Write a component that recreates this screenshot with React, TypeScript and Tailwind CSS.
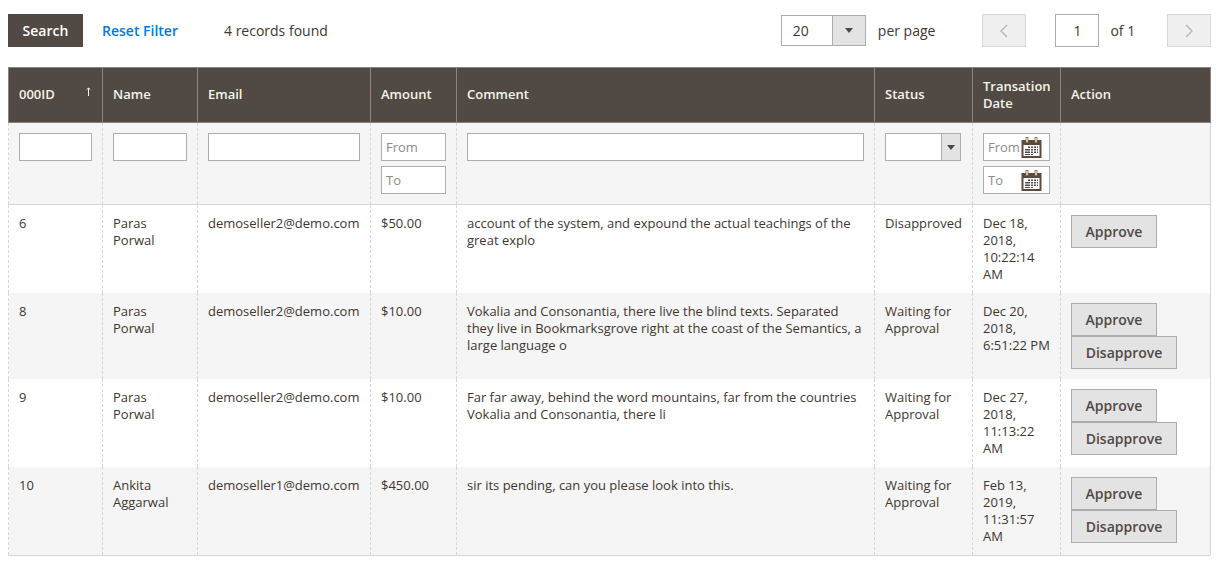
const rows = [
  {
    id: "6",
    name: "Paras Porwal",
    email: "demoseller2@demo.com",
    amount: "$50.00",
    comment: "account of the system, and expound the actual teachings of the great explo",
    status: "Disapproved",
    date: "Dec 18, 2018, 10:22:14 AM",
    disapprove: false,
  },
  {
    id: "8",
    name: "Paras Porwal",
    email: "demoseller2@demo.com",
    amount: "$10.00",
    comment:
      "Vokalia and Consonantia, there live the blind texts. Separated they live in Bookmarksgrove right at the coast of the Semantics, a large language o",
    status: "Waiting for Approval",
    date: "Dec 20, 2018, 6:51:22 PM",
    disapprove: true,
  },
  {
    id: "9",
    name: "Paras Porwal",
    email: "demoseller2@demo.com",
    amount: "$10.00",
    comment:
      "Far far away, behind the word mountains, far from the countries Vokalia and Consonantia, there li",
    status: "Waiting for Approval",
    date: "Dec 27, 2018, 11:13:22 AM",
    disapprove: true,
  },
  {
    id: "10",
    name: "Ankita Aggarwal",
    email: "demoseller1@demo.com",
    amount: "$450.00",
    comment: "sir its pending, can you please look into this.",
    status: "Waiting for Approval",
    date: "Feb 13, 2019, 11:31:57 AM",
    disapprove: true,
  },
];

function Caret() {
  return <span className="block h-0 w-0 border-x-[4.5px] border-t-[5px] border-x-transparent border-t-[#514943]" />;
}

function Calendar() {
  return (
    <svg width="21" height="21" viewBox="0 0 21 21" className="shrink-0">
      <rect x="0.5" y="3" width="20" height="18" fill="#5e4a3c" />
      <rect x="2.5" y="8" width="16" height="11" fill="#fff" />
      <rect x="5" y="0.5" width="2" height="5" fill="#fff" stroke="#8a5f3a" strokeWidth="0.8" />
      <rect x="14" y="0.5" width="2" height="5" fill="#fff" stroke="#8a5f3a" strokeWidth="0.8" />
      <g fill="#514943">
        <rect x="7" y="9.5" width="10" height="1.5" />
        <rect x="4" y="12" width="13" height="1.5" />
        <rect x="4" y="14.5" width="13" height="1.5" />
        <rect x="4" y="17" width="9" height="1" />
      </g>
      <g fill="#fff">
        <rect x="9" y="9" width="1" height="9" />
        <rect x="12" y="9" width="1" height="9" />
        <rect x="15" y="9" width="1" height="9" />
      </g>
    </svg>
  );
}

function TextInput({ className, placeholder }: { className: string; placeholder?: string }) {
  return (
    <div className={`flex h-7 items-center border border-[#adadad] bg-white text-[#8a8a8a] ${className}`}>
      {placeholder}
    </div>
  );
}

function DateInput({ placeholder }: { placeholder: string }) {
  return (
    <div className="flex h-7 w-[67px] items-center justify-between border border-[#adadad] bg-white pl-[4px] pr-[7px] text-[#8a8a8a]">
      <span>{placeholder}</span>
      <Calendar />
    </div>
  );
}

function ActionButton({ label, className }: { label: string; className: string }) {
  return (
    <button className={`block h-[33px] border border-[#adadad] bg-[#e3e3e3] text-[14px] font-semibold text-[#514943] ${className}`}>
      {label}
    </button>
  );
}

const th = "border border-[#8a837e] px-[10px] text-left align-middle font-semibold text-[13px] leading-[17px] text-[#f7f3eb]";
const thSingle = `${th} pb-[2px]`;
const td = "border-x border-dashed border-x-[#d6d6d6] p-[10px] align-top";

export default function App() {
  return (
    <div className="h-[567px] w-[1221px] overflow-hidden bg-white font-['Open_Sans',sans-serif] text-[13px] leading-[17px] text-[#41362f]">
      <div className="flex h-[67px] items-start pl-2 pt-[14px]">
        <button className="h-[33px] w-[75px] bg-[#514943] text-[14px] font-semibold text-white">Search</button>
        <span className="ml-[19px] mt-2 text-[14px] font-semibold text-[#007bdb]">Reset Filter</span>
        <span className="ml-[46px] mt-2 text-[14px]">4 records found</span>
        <div className="ml-[453px] mt-px flex h-[31px] w-[85px] border border-[#adadad]">
          <span className="flex-1 pl-[11px] pt-[6px] text-[14px]">20</span>
          <span className="flex w-[33px] items-center justify-center border-l border-[#adadad] bg-[#e3e3e3]">
            <Caret />
          </span>
        </div>
        <span className="ml-[12px] mt-2 text-[14px]">per page</span>
        <span className="ml-[47px] flex h-[33px] w-[44px] items-center justify-center border border-[#d6d6d6] bg-[#f0f0f0]">
          <svg width="12" height="16" viewBox="0 0 12 16" fill="none" stroke="#b5b5b5" strokeWidth="1.4">
            <path d="M9 2 3 8l6 6" />
          </svg>
        </span>
        <span className="ml-[29px] flex h-[33px] w-[44px] items-center justify-center border border-[#adadad] text-[14px]">1</span>
        <span className="ml-[11px] mt-2 text-[14px]">of 1</span>
        <span className="ml-[32px] flex h-[33px] w-[44px] items-center justify-center border border-[#d6d6d6] bg-[#f0f0f0]">
          <svg width="12" height="16" viewBox="0 0 12 16" fill="none" stroke="#b5b5b5" strokeWidth="1.4">
            <path d="M3 2l6 6-6 6" />
          </svg>
        </span>
      </div>
      <div className="pl-2">
        <table className="w-[1202px] table-fixed border-collapse">
          <colgroup>
            <col className="w-[94px]" />
            <col className="w-[95px]" />
            <col className="w-[173px]" />
            <col className="w-[86px]" />
            <col className="w-[418px]" />
            <col className="w-[98px]" />
            <col className="w-[88px]" />
            <col className="w-[150px]" />
          </colgroup>
          <thead>
            <tr className="h-[55px] bg-[#514943]">
              <th className={thSingle}>
                <div className="relative">
                  000ID
                  <svg width="5" height="9" viewBox="0 0 5 9" fill="none" stroke="#f7f3eb" className="absolute right-[1px] top-[1px]">
                    <path d="M2.5 9V1M.8 2.6 2.5.8l1.7 1.8" />
                  </svg>
                </div>
              </th>
              <th className={thSingle}>Name</th>
              <th className={thSingle}>Email</th>
              <th className={thSingle}>Amount</th>
              <th className={thSingle}>Comment</th>
              <th className={thSingle}>Status</th>
              <th className={th}>Transation Date</th>
              <th className={thSingle}>Action</th>
            </tr>
          </thead>
          <tbody>
            <tr className="h-[82px] border-b border-b-[#d6d6d6] bg-[#f5f5f5]">
              <td className={`${td} border-l-solid border-l-[#d6d6d6]`}>
                <TextInput className="w-[73px]" />
              </td>
              <td className={td}>
                <TextInput className="w-[74px]" />
              </td>
              <td className={td}>
                <TextInput className="w-[152px]" />
              </td>
              <td className={td}>
                <TextInput className="w-[65px] pl-[4px]" placeholder="From" />
                <TextInput className="mt-[5px] w-[65px] pl-[4px]" placeholder="To" />
              </td>
              <td className={td}>
                <TextInput className="w-[397px]" />
              </td>
              <td className={td}>
                <div className="flex h-7 w-[76px] border border-[#adadad] bg-white">
                  <span className="flex-1" />
                  <span className="flex w-[19px] items-center justify-center border-l border-[#adadad] bg-[#e3e3e3]">
                    <Caret />
                  </span>
                </div>
              </td>
              <td className={td}>
                <DateInput placeholder="From" />
                <div className="mt-[5px]">
                  <DateInput placeholder="To" />
                </div>
              </td>
              <td className="border-r border-r-[#d6d6d6]" />
            </tr>
            {rows.map((row, i) => (
              <tr key={row.id} className={i % 2 === 0 ? "bg-white" : "bg-[#f5f5f5]"}>
                <td className={`${td} border-l-solid border-l-[#d6d6d6]`}>{row.id}</td>
                <td className={td}>{row.name}</td>
                <td className={td}>{row.email}</td>
                <td className={td}>{row.amount}</td>
                <td className={td}>{row.comment}</td>
                <td className={td}>{row.status}</td>
                <td className={td}>{row.date}</td>
                <td className="border-r border-r-[#d6d6d6] p-[10px] align-top">
                  <ActionButton label="Approve" className="w-[86px]" />
                  {row.disapprove && <ActionButton label="Disapprove" className="w-[106px]" />}
                </td>
              </tr>
            ))}
          </tbody>
        </table>
        <div className="h-px w-[1202px] bg-[#d6d6d6]" />
      </div>
    </div>
  );
}
